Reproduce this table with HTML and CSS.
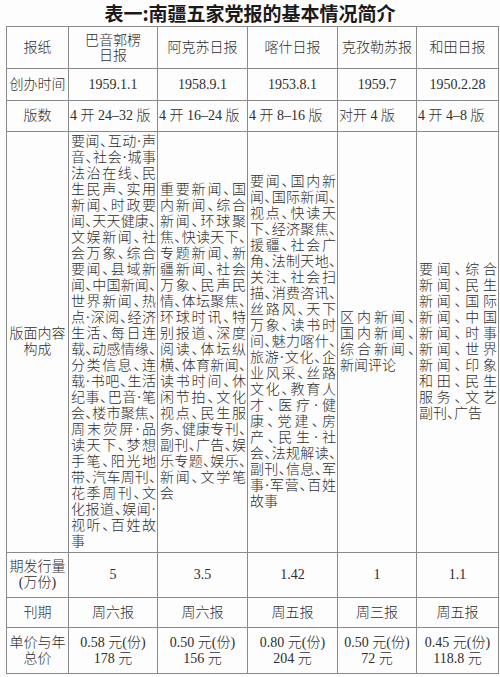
FILE: index.html
```html
<!DOCTYPE html>
<html lang="zh-CN">
<head>
<meta charset="utf-8">
<title>南疆五家党报的基本情况简介</title>
<link rel="stylesheet" href="styles.css">
</head>
<body>
<div class="page">
  <h1 class="title">表一:南疆五家党报的基本情况简介</h1>
  <table class="info">
    <colgroup>
      <col class="c-label">
      <col class="c-a">
      <col class="c-b">
      <col class="c-c">
      <col class="c-d">
      <col class="c-e">
    </colgroup>
    <tr class="r-head">
      <td>报纸</td>
      <td>巴音郭楞<br>日报</td>
      <td>阿克苏日报</td>
      <td>喀什日报</td>
      <td>克孜勒苏报</td>
      <td>和田日报</td>
    </tr>
    <tr class="r-date">
      <td>创办时间</td>
      <td>1959.1.1</td>
      <td>1958.9.1</td>
      <td>1953.8.1</td>
      <td>1959.7</td>
      <td>1950.2.28</td>
    </tr>
    <tr class="r-ver">
      <td>版数</td>
      <td class="left">4 开 24–32 版</td>
      <td class="left">4 开 16–24 版</td>
      <td class="left">4 开 8–16 版</td>
      <td class="left">对开 4 版</td>
      <td class="left">4 开 4–8 版</td>
    </tr>
    <tr class="r-content">
      <td>版面内容<br>构成</td>
      <td class="txt">
        <p class="just">要闻、互动·声<br>音、社会·城事<br>法治在线、民<br>生民声、实用<br>新闻、时政要<br>闻、天天健康、<br>文娱新闻、社<br>会万象、综合<br>要闻、县域新<br>闻、中国新闻、<br>世界新闻、热<br>点·深阅、经济<br>生活、每日连<br>载、动感情缘、<br>分类信息、连<br>载·书吧、生活<br>纪事、巴音·笔<br>会、楼市聚焦、<br>周末荧屏·品<br>读天下、梦想<br>手笔、阳光地<br>带、汽车周刊、<br>花季周刊、文<br>化报道、娱闻·<br>视听、百姓故</p>
        <p>事</p>
      </td>
      <td class="txt">
        <p class="just">重要新闻、国<br>内新闻、综合<br>新闻、环球聚<br>焦、快读天下、<br>专题新闻、新<br>疆新闻、社会<br>万象、民声民<br>情、体坛聚焦、<br>环球时讯、特<br>别报道、深度<br>阅读、体坛纵<br>横、体育新闻、<br>读书时间、休<br>闲节拍、文化<br>视点、民生服<br>务、健康专刊、<br>副刊、广告、娱<br>乐专题、娱乐、<br>新闻、文学笔</p>
        <p>会</p>
      </td>
      <td class="txt">
        <p class="just">要闻、国内新<br>闻、国际新闻、<br>视点、快读天<br>下、经济聚焦、<br>援疆、社会广<br>角、法制天地、<br>关注、社会扫<br>描、消费咨讯、<br>丝路风、天下<br>万象、读书时<br>间、魅力喀什、<br>旅游·文化、企<br>业风采、丝路<br>文化、教育人<br>才、医疗·健<br>康、党建、房<br>产、民生·社<br>会、法规解读、<br>副刊、信息、军<br>事·军营、百姓</p>
        <p>故事</p>
      </td>
      <td class="txt">
        <p class="just">区内新闻、<br>国内新闻、<br>综合新闻、</p>
        <p>新闻评论</p>
      </td>
      <td class="txt">
        <p class="just">要闻、综合<br>新闻、民生<br>新闻、国际<br>新闻、中国<br>新闻、时事<br>新闻、世界<br>新闻、印象<br>和田、民生<br>服务、文艺</p>
        <p>副刊、广告</p>
      </td>
    </tr>
    <tr class="r-circ">
      <td>期发行量<br>(万份)</td>
      <td>5</td>
      <td>3.5</td>
      <td>1.42</td>
      <td>1</td>
      <td>1.1</td>
    </tr>
    <tr class="r-cycle">
      <td>刊期</td>
      <td>周六报</td>
      <td>周六报</td>
      <td>周五报</td>
      <td>周三报</td>
      <td>周五报</td>
    </tr>
    <tr class="r-price">
      <td>单价与年<br>总价</td>
      <td>0.58 元(份)<br>178 元</td>
      <td>0.50 元(份)<br>156 元</td>
      <td>0.80 元(份)<br>204 元</td>
      <td>0.50 元(份)<br>72 元</td>
      <td>0.45 元(份)<br>118.8 元</td>
    </tr>
  </table>
</div>
</body>
</html>
```

FILE: styles.css
```css
html, body {
  margin: 0;
  padding: 0;
  background: #fdfdfd;
}

.page {
  width: 500px;
  padding: 0 0 0 6px;
  box-sizing: border-box;
  font-family: "Liberation Serif", "Noto Sans CJK SC", serif;
  color: #2e2e2e;
}

.title {
  margin: 0;
  height: 26px;
  line-height: 26px;
  font-family: "Noto Sans CJK SC", sans-serif;
  font-size: 19px;
  font-weight: 700;
  color: #1a1a1a;
  text-align: center;
  padding-right: 6px;
}

.info {
  border-collapse: collapse;
  table-layout: fixed;
  width: 492px;
  font-size: 14px;
  line-height: 16px;
}

.c-label { width: 62px; }
.c-a { width: 89px; }
.c-b { width: 90px; }
.c-c { width: 90px; }
.c-d { width: 79px; }
.c-e { width: 82px; }

.info td {
  border: 1px solid #8a8a8a;
  padding: 0 1px;
  text-align: center;
  vertical-align: middle;
  font-weight: 300;
}

.info td.left {
  text-align: left;
  padding-left: 1px;
}

.r-head td { height: 41px; }
.r-date td { height: 31px; }
.r-ver td { height: 30px; }
.r-content td { height: 420px; }
.r-circ td { height: 44px; }
.r-cycle td { height: 29px; }
.r-price td { height: 45px; }

.r-head td,
.r-cycle td,
.r-label {
  line-height: 15px;
}

.info td.txt {
  text-align: left;
  padding: 0 1px 0 2px;
  font-feature-settings: "halt";
}

.txt p {
  margin: 0;
}

.txt .just {
  text-align: justify;
  text-align-last: justify;
}
```
